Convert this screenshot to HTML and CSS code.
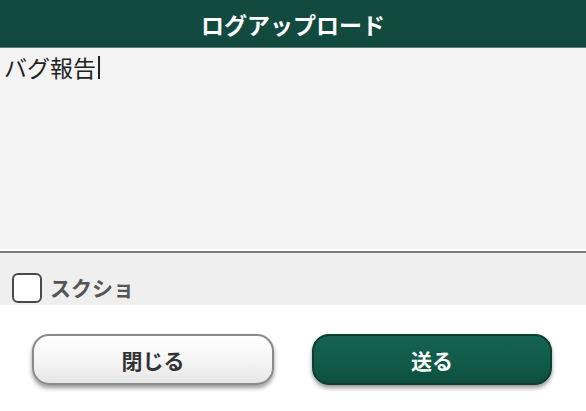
FILE: index.html
```html
<!DOCTYPE html>
<html lang="ja">
<head>
  <meta charset="UTF-8" />
  <meta name="viewport" content="width=device-width, initial-scale=1.0"/>
  <title>ログアップロード</title>
  <link rel="stylesheet" href="styles.css">
</head>
<body>

  <div class="header">ログアップロード</div>

  <div class="memo"><span class="memo-text">バグ報告</span><span class="caret"></span></div>

  <div class="option">
    <span class="check"></span>
    <label>スクショ</label>
  </div>

  <div class="actions">
    <button class="btn btn-close">閉じる</button>
    <button class="btn btn-send">送る</button>
  </div>

</body>
</html>
```

FILE: styles.css
```css
body {
  margin: 0;
  font-family: "Noto Sans CJK JP", "Noto Sans", sans-serif;
  background: #ffffff;
  width: 586px;
  height: 411px;
  overflow: hidden;
}
.header {
  height: 47px;
  background: #134a3f;
  color: #ffffff;
  font-size: 23px;
  font-weight: bold;
  display: flex;
  align-items: center;
  justify-content: center;
  border-bottom: 1px solid #5f7d76;
}
.memo {
  height: 199px;
  background: #f3f3f3;
  padding: 4px 0 0 4px;
  display: flex;
  align-items: flex-start;
  font-size: 23px;
  line-height: 30px;
  color: #222;
}
.caret {
  display: inline-block;
  width: 2px;
  height: 23px;
  margin-top: 4px;
  margin-left: 2px;
  background: #222;
}
.option {
  height: 54px;
  box-sizing: border-box;
  background: #efefef;
  border-top: 2px solid #7a7a7a;
  box-shadow: 0 -2px 0 #ffffff;
  display: flex;
  align-items: flex-end;
  padding: 0 0 2px 12px;
  gap: 8px;
}
.check {
  width: 30px;
  height: 30px;
  box-sizing: border-box;
  border: 2px solid #4a4a4a;
  border-radius: 6px;
  background: #ffffff;
}
.option label {
  font-size: 21px;
  font-weight: bold;
  color: #555;
  line-height: 32px;
}
.actions {
  display: flex;
  gap: 38px;
  padding: 29px 0 0 32px;
}
.btn {
  width: 242px;
  height: 51px;
  border-radius: 17px;
  font-family: inherit;
  font-size: 21px;
  font-weight: bold;
  box-shadow: 0 3px 4px rgba(0,0,0,0.4);
  cursor: pointer;
}
.btn-close {
  background: linear-gradient(#ffffff, #f6f6f6 50%, #e6e6e6);
  border: 2px solid #8a8a8a;
  color: #333;
}
.btn-send {
  width: 240px;
  background: linear-gradient(#156250, #115a48 60%, #0e4f3f);
  border: 2px solid #0c3e32;
  color: #ffffff;
}
```
